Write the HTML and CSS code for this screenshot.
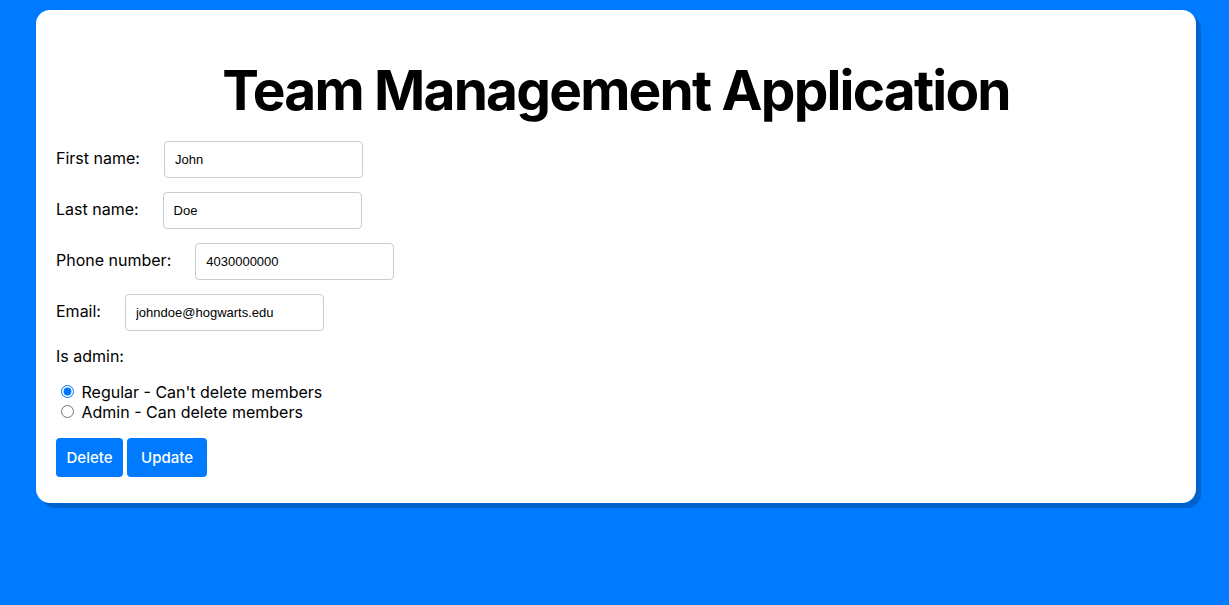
FILE: index.html
```html
<!DOCTYPE html>
<html>
<head>
<meta charset="utf-8">
<link rel="stylesheet" href="styles.css">
</head>
<body>
<div class="card">
  <h1 class="title">Team Management Application</h1>
  <form class="form">
    <div class="row">
      <label class="label">First name:</label>
      <input class="field" type="text" value="John">
    </div>
    <div class="row">
      <label class="label">Last name:</label>
      <input class="field" type="text" value="Doe">
    </div>
    <div class="row">
      <label class="label">Phone number:</label>
      <input class="field" type="text" value="4030000000">
    </div>
    <div class="row">
      <label class="label">Email:</label>
      <input class="field" type="text" value="johndoe@hogwarts.edu">
    </div>
    <div class="admin-label">Is admin:</div>
    <div class="radios">
      <label class="radio"><input type="radio" name="role" checked> Regular - Can't delete members</label>
      <label class="radio"><input type="radio" name="role"> Admin - Can delete members</label>
    </div>
    <div class="buttons">
      <button type="button" class="btn btn-delete">Delete</button>
      <button type="button" class="btn btn-update">Update</button>
    </div>
  </form>
</div>
</body>
</html>
```

FILE: styles.css
```css
html, body {
  margin: 0;
  padding: 0;
}
body {
  background: #007bff;
  font-family: Inter, "Noto Sans", sans-serif;
  color: #000;
  padding: 10px 33px 0 36px;
  height: 605px;
  box-sizing: border-box;
}
.card {
  background: #fff;
  border-radius: 14px;
  box-shadow: 5px 5px 0 #0062cc;
  padding: 40px 20px 26px 20px;
  height: 493px;
  box-sizing: border-box;
}
.title {
  margin: 0 0 11px 0;
  text-align: center;
  font-size: 55px;
  line-height: 80px;
  font-weight: 700;
  letter-spacing: -1.8px;
}
.row {
  display: flex;
  align-items: center;
  margin-bottom: 15px;
}
.label {
  font-size: 16px;
  margin-right: 24px;
  position: relative;
  top: -2px;
}
.field {
  width: 199px;
  height: 37px;
  box-sizing: border-box;
  border: 1px solid #ccc;
  border-radius: 4px;
  padding: 0 10px;
  font-family: "Liberation Sans", Arial, sans-serif;
  font-size: 13px;
  color: #000;
}
.row + .row {
  margin-top: -1px;
}
.admin-label {
  font-size: 16px;
  margin-top: 15px;
  margin-bottom: 16px;
}
.radios {
  display: flex;
  flex-direction: column;
  font-size: 16px;
  line-height: 20px;
}
.radio input {
  margin: 3px 3px 0 5px;
}
.buttons {
  display: flex;
  gap: 4px;
  margin-top: 16px;
}
.btn {
  background: #007bff;
  color: #fff;
  border: none;
  border-radius: 4px;
  height: 39px;
  padding: 0;
  font-family: Inter, "Noto Sans", sans-serif;
  font-size: 15px;
  font-weight: 500;
  text-align: center;
}
.btn-delete {
  width: 67px;
}
.btn-update {
  width: 80px;
}
```
